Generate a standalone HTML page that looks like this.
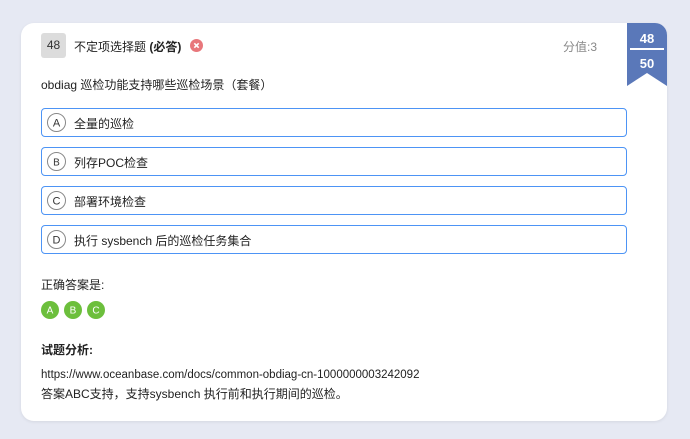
<!DOCTYPE html>
<html><head><meta charset="utf-8"><style>
*{margin:0;padding:0;box-sizing:border-box}
body{width:690px;height:439px;background:#e6e9f3;font-family:"Liberation Sans","Noto Sans CJK SC",sans-serif;font-size:12px;color:#222;position:relative;overflow:hidden}
.card{position:absolute;left:21px;top:23px;width:646px;height:398px;background:#fff;border-radius:13px;box-shadow:0 1px 3px rgba(0,0,0,.08)}
.num{position:absolute;left:41px;top:33px;width:25px;height:25px;background:#dcdcdc;border-radius:3px;text-align:center;line-height:25px;font-size:12px;color:#333}
.t{position:absolute;white-space:nowrap}
.u{font-size:11.5px}
.opt{position:absolute;left:41px;width:586px;height:29px;border:1px solid #4d94f5;border-radius:4px}
.opt svg{position:absolute;left:5px;top:4px}
.opt .l{position:absolute;left:32px;top:6px;font-size:12px}
svg text{font-family:"Liberation Sans",sans-serif}
</style></head><body>
<div class="card"></div>
<div class="num">48</div>
<div class="t" style="left:74px;top:38px">不定项选择题 <b>(必答)</b></div>
<svg style="position:absolute;left:190px;top:39px" width="13" height="13"><circle cx="6.5" cy="6.5" r="6.5" fill="#e8777b"/><path d="M4.3 4.3L8.7 8.7M8.7 4.3L4.3 8.7" stroke="#fff" stroke-width="1.6"/></svg>
<div class="t" style="left:563px;top:38px;color:#888">分值:3</div>
<svg style="position:absolute;left:627px;top:23px" width="40" height="64"><path d="M0 0H28A12 12 0 0 1 40 12V63L20 50L0 63Z" fill="#5a78b9"/><rect x="3" y="25" width="34" height="2" fill="#fff"/><text x="20" y="20" text-anchor="middle" fill="#fff" font-weight="bold" font-size="13">48</text><text x="20" y="45" text-anchor="middle" fill="#fff" font-weight="bold" font-size="13">50</text></svg>
<div class="t" style="left:41px;top:76px">obdiag 巡检功能支持哪些巡检场景（套餐）</div>
<div class="opt" style="top:108px"><svg width="19" height="19"><circle cx="9.5" cy="9.5" r="9" fill="none" stroke="#888"/><text x="9.5" y="13.5" text-anchor="middle" font-size="11" fill="#333">A</text></svg><div class="l">全量的巡检</div></div>
<div class="opt" style="top:147px"><svg width="19" height="19"><circle cx="9.5" cy="9.5" r="9" fill="none" stroke="#888"/><text x="9.5" y="13.5" text-anchor="middle" font-size="10" fill="#333">B</text></svg><div class="l">列存POC检查</div></div>
<div class="opt" style="top:186px"><svg width="19" height="19"><circle cx="9.5" cy="9.5" r="9" fill="none" stroke="#888"/><text x="9.5" y="13.5" text-anchor="middle" font-size="11" fill="#333">C</text></svg><div class="l">部署环境检查</div></div>
<div class="opt" style="top:225px"><svg width="19" height="19"><circle cx="9.5" cy="9.5" r="9" fill="none" stroke="#888"/><text x="9.5" y="13.5" text-anchor="middle" font-size="11" fill="#333">D</text></svg><div class="l">执行 sysbench 后的巡检任务集合</div></div>
<div class="t" style="left:41px;top:276px">正确答案是:</div>
<svg style="position:absolute;left:41px;top:301px" width="64" height="18"><circle cx="9" cy="9" r="9" fill="#6cbf3c"/><circle cx="32" cy="9" r="9" fill="#6cbf3c"/><circle cx="55" cy="9" r="9" fill="#6cbf3c"/><g fill="#fff" font-size="10" text-anchor="middle"><text x="9" y="12.6">A</text><text x="32" y="12.6">B</text><text x="55" y="12.6">C</text></g></svg>
<div class="t" style="left:41px;top:341px;font-weight:bold">试题分析:</div>
<div class="t u" style="left:41px;top:369px">https://www.oceanbase.com/docs/common-obdiag-cn-1000000003242092</div>
<div class="t" style="left:41px;top:385px">答案ABC支持，支持sysbench 执行前和执行期间的巡检。</div>
</body></html>
